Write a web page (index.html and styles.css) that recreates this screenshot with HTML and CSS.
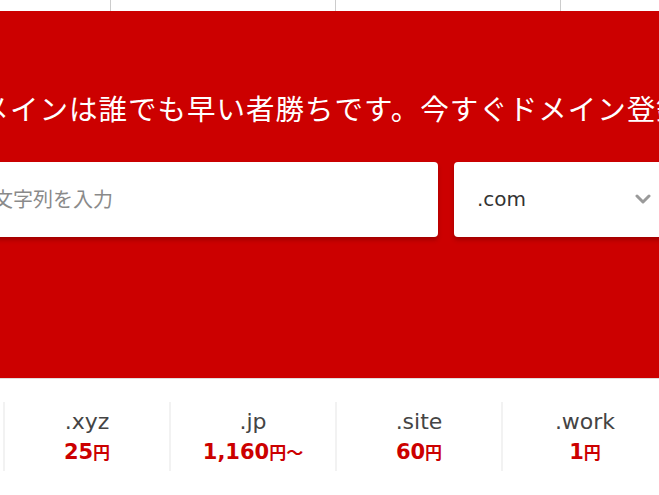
FILE: index.html
```html
<!DOCTYPE html>
<html lang="ja">
<head>
<meta charset="utf-8">
<title>ドメイン検索</title>
<link rel="stylesheet" href="styles.css">
</head>
<body>
<nav class="nav">
  <a class="nav-item" href="#">ホーム</a>
  <a class="nav-item" href="#">ドメイン</a>
  <a class="nav-item" href="#">サーバー</a>
  <a class="nav-item" href="#">サポート</a>
</nav>
<section class="hero">
  <h1 class="hero-title">ドメインは誰でも早い者勝ちです。今すぐドメイン登録しましょう！</h1>
  <form class="search">
    <input class="search-input" type="text" placeholder="ご希望の文字列を入力">
    <div class="search-select">
      <span class="select-value">.com</span>
      <svg class="chevron" width="16" height="10" viewBox="0 0 16 10"><path d="M2 2 L8 8 L14 2" fill="none" stroke="#9a9a9a" stroke-width="3" stroke-linecap="round" stroke-linejoin="round"/></svg>
    </div>
  </form>
</section>
<section class="prices">
  <div class="price-col"><div class="tld">.com</div><div class="price">1<span class="yen">円</span></div></div>
  <div class="price-col"><div class="tld">.xyz</div><div class="price">25<span class="yen">円</span></div></div>
  <div class="price-col"><div class="tld">.jp</div><div class="price">1,160<span class="yen">円〜</span></div></div>
  <div class="price-col"><div class="tld">.site</div><div class="price">60<span class="yen">円</span></div></div>
  <div class="price-col"><div class="tld">.work</div><div class="price">1<span class="yen">円</span></div></div>
</section>
</body>
</html>
```

FILE: styles.css
```css
html, body {
  margin: 0;
  padding: 0;
}
body {
  background: #ffffff;
  overflow: hidden;
  font-family: "DejaVu Sans", "Noto Sans CJK JP", sans-serif;
  width: 659px;
}
.nav {
  display: flex;
  height: 11px;
  margin-left: -115px;
  overflow: hidden;
}
.nav-item {
  flex: 0 0 225px;
  box-sizing: border-box;
  border-left: 1px solid #cccccc;
  color: transparent;
  font-size: 1px;
  text-decoration: none;
}
.hero {
  background: #cc0000;
  height: 368px;
  border-bottom: 1px solid #e2dcdc;
  box-sizing: border-box;
  padding-top: 77px;
  overflow: hidden;
}
.hero-title {
  margin: 0 0 0 -49px;
  font-family: "Noto Sans CJK JP", sans-serif;
  font-weight: 400;
  font-size: 28.5px;
  letter-spacing: 1px;
  line-height: 40px;
  color: #ffffff;
  white-space: nowrap;
}
.search {
  display: flex;
  gap: 16px;
  margin: 34px 0 0 -122px;
}
.search-input {
  flex: 0 0 560px;
  box-sizing: border-box;
  height: 75px;
  border: none;
  border-radius: 4px;
  background: #ffffff;
  padding: 0 0 3px 35px;
  font-family: "Noto Sans CJK JP", sans-serif;
  font-size: 20px;
  color: #333333;
  box-shadow: 0 3px 4px rgba(80, 0, 0, 0.35);
  outline: none;
}
.search-input::placeholder {
  color: #8a8a8a;
}
.search-select {
  flex: 0 0 260px;
  box-sizing: border-box;
  height: 75px;
  border-radius: 4px;
  background: #ffffff;
  display: flex;
  align-items: center;
  justify-content: space-between;
  padding: 0 63px 2px 23px;
  box-shadow: 0 3px 4px rgba(80, 0, 0, 0.35);
}
.select-value {
  font-family: "DejaVu Sans", sans-serif;
  font-size: 20px;
  color: #333333;
}
.chevron {
  display: block;
}
.prices {
  display: flex;
  margin: 23px 0 0 -163px;
}
.price-col {
  flex: 0 0 166px;
  box-sizing: border-box;
  height: 69px;
  border-left: 2px solid #f2f2f2;
  text-align: center;
  padding-top: 6px;
}
.tld {
  font-family: "DejaVu Sans", sans-serif;
  font-size: 22px;
  line-height: 28px;
  color: #444444;
}
.price {
  margin-top: 2px;
  font-family: "DejaVu Sans", sans-serif;
  font-weight: 700;
  font-size: 21px;
  line-height: 28px;
  color: #cc0000;
}
.yen {
  font-family: "Noto Sans CJK JP", sans-serif;
  font-size: 17px;
  font-weight: 700;
}
```
